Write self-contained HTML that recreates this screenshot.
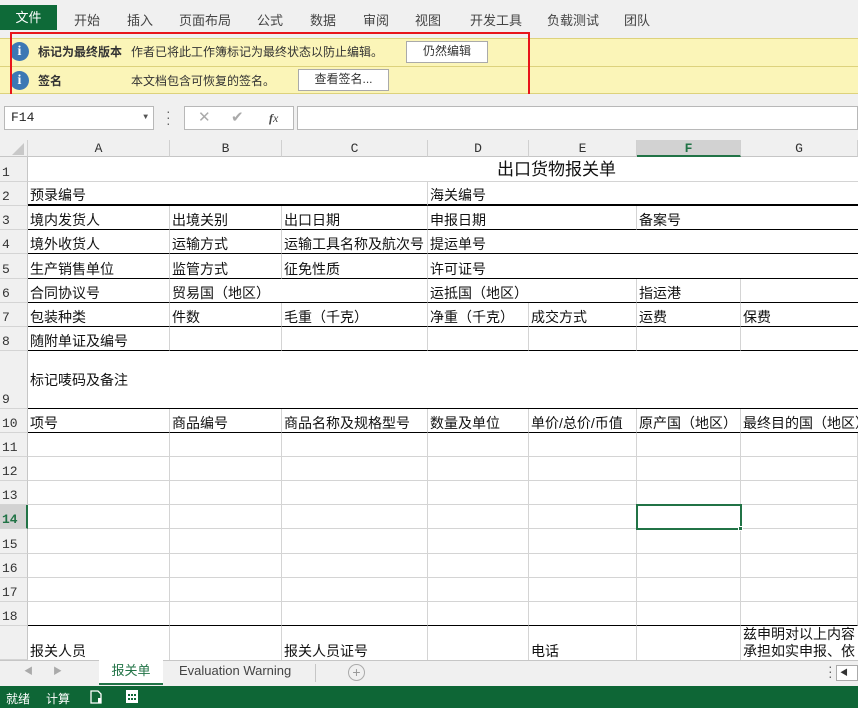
<!DOCTYPE html>
<html><head><meta charset="utf-8"><style>
*{box-sizing:border-box;margin:0;padding:0}
body{width:858px;height:708px;overflow:hidden;position:relative;background:#fff;font-family:"Liberation Sans","Noto Sans CJK SC",sans-serif;color:#222}
.abs{position:absolute}
.menu{left:0;top:0;width:858px;height:38px;background:#f0f0f0}
.file{left:0;top:5px;width:57px;height:25px;background:#0e6a38;color:#fff;font-size:13px;text-align:center;line-height:25px}
.ybar{left:0;top:38px;width:858px;height:56px;background:#fbf5b8;border-top:1px solid #ddd27c;border-bottom:1px solid #ddd27c}
.ydiv{left:0;top:66px;width:858px;height:1px;background:#ddd27c}
.info{width:19px;height:19px;border-radius:50%;background:#3c78b4;color:#fff;font:bold 14px "Liberation Serif",serif;text-align:center;line-height:19px}
.yt{font-size:12px;color:#333}
.btn{background:#fff;border:1px solid #aaa;font-size:12px;text-align:center;line-height:19px;color:#333}
.red{left:10px;top:32px;width:520px;height:64px;border:2px solid #e8141b}
.gray{left:0;top:94px;width:858px;height:46px;background:#f0f0f0}
.box{background:#fff;border:1px solid #b8b8b8}
table{position:absolute;left:28px;top:157px;border-collapse:separate;border-spacing:0;table-layout:fixed;width:830px}
td{border-right:1px solid #d4d4d4;border-bottom:1px solid #d4d4d4;padding:0 2px 0 2px;vertical-align:bottom;white-space:nowrap;overflow:hidden;font-size:14px;line-height:18px;color:#111}
tr.b td{border-bottom:1px solid #000}
tr.bb td{border-bottom:2px solid #000}
tr.last td{vertical-align:top;padding:0}
tr.last td div{height:34px;overflow:hidden;padding:16px 2px 0 2px;white-space:nowrap}
tr.last td div.w{padding-top:0;white-space:normal;word-break:break-all;line-height:17px}
.ch{top:140px;height:17px;background:#f0f0f0;border-right:1px solid #d0d0d0;border-bottom:1px solid #c6c6c6;font:13px "Liberation Mono",monospace;text-align:center;line-height:17px;color:#333}
.rh{left:0;width:28px;background:#f0f0f0;border-right:1px solid #c6c6c6;border-bottom:1px solid #d4d4d4;font:13px "Liberation Mono",monospace;color:#333;text-align:left;padding-left:2px;display:flex;align-items:flex-end;line-height:16px}
.tabs{left:0;top:660px;width:858px;height:26px;background:#f0f0f0;border-top:1px solid #c6c6c6}
.status{left:0;top:686px;width:858px;height:22px;background:#0e6636;color:#fff;font-size:12px}
</style></head><body>
<div class="abs menu"></div>
<div class="abs file">文件</div>
<div class="abs" style="left:0;top:0;width:858px;height:38px">
<span class="abs" style="left:74px;top:10px;font-size:13px;color:#444">开始</span>
<span class="abs" style="left:127px;top:10px;font-size:13px;color:#444">插入</span>
<span class="abs" style="left:179px;top:10px;font-size:13px;color:#444">页面布局</span>
<span class="abs" style="left:257px;top:10px;font-size:13px;color:#444">公式</span>
<span class="abs" style="left:310px;top:10px;font-size:13px;color:#444">数据</span>
<span class="abs" style="left:363px;top:10px;font-size:13px;color:#444">审阅</span>
<span class="abs" style="left:415px;top:10px;font-size:13px;color:#444">视图</span>
<span class="abs" style="left:470px;top:10px;font-size:13px;color:#444">开发工具</span>
<span class="abs" style="left:547px;top:10px;font-size:13px;color:#444">负载测试</span>
<span class="abs" style="left:624px;top:10px;font-size:13px;color:#444">团队</span>
</div>
<div class="abs ybar"></div><div class="abs ydiv"></div>
<div class="abs info" style="left:10px;top:42px">i</div>
<div class="abs info" style="left:10px;top:71px">i</div>
<div class="abs yt" style="left:38px;top:43px;font-weight:bold">标记为最终版本</div>
<div class="abs yt" style="left:131px;top:43px">作者已将此工作簿标记为最终状态以防止编辑。</div>
<div class="abs btn" style="left:406px;top:41px;width:82px;height:22px">仍然编辑</div>
<div class="abs yt" style="left:38px;top:72px;font-weight:bold">签名</div>
<div class="abs yt" style="left:131px;top:72px">本文档包含可恢复的签名。</div>
<div class="abs btn" style="left:298px;top:69px;width:91px;height:22px">查看签名...</div>
<div class="abs red"></div>
<div class="abs gray"></div>
<div class="abs box" style="left:4px;top:106px;width:150px;height:24px;font:13px 'Liberation Mono',monospace;line-height:22px;padding-left:6px">F14<span class="abs" style="right:5px;top:0;font-size:8px;color:#555">▼</span></div>
<div class="abs" style="left:166px;top:108px;font-size:14px;color:#666;line-height:6px">·<br>·<br>·</div>
<div class="abs box" style="left:184px;top:106px;width:110px;height:24px;color:#aaa;font-size:15px;line-height:22px"><span class="abs" style="left:13px">✕</span><span class="abs" style="left:46px">✔</span><span class="abs" style="left:84px;color:#444;font:italic 12px 'Liberation Serif',serif;line-height:22px"><b>f</b>x</span></div>
<div class="abs box" style="left:297px;top:106px;width:561px;height:24px"></div>
<div class="abs ch" style="left:0;width:28px;background:#f0f0f0"><svg width="12" height="12" style="position:absolute;left:12px;top:3px"><path d="M12 0 L12 12 L0 12 Z" fill="#c8c8c8"/></svg></div>
<div class="abs ch" style="left:28px;width:142px">A</div>
<div class="abs ch" style="left:170px;width:112px">B</div>
<div class="abs ch" style="left:282px;width:146px">C</div>
<div class="abs ch" style="left:428px;width:101px">D</div>
<div class="abs ch" style="left:529px;width:108px">E</div>
<div class="abs ch" style="left:637px;width:104px;background:#d2d2d2;color:#217346;font-weight:bold;border-bottom:2px solid #217346">F</div>
<div class="abs ch" style="left:741px;width:117px">G</div>
<div class="abs rh" style="top:157px;height:25px">1</div>
<div class="abs rh" style="top:182px;height:24px">2</div>
<div class="abs rh" style="top:206px;height:24px">3</div>
<div class="abs rh" style="top:230px;height:24px">4</div>
<div class="abs rh" style="top:254px;height:25px">5</div>
<div class="abs rh" style="top:279px;height:24px">6</div>
<div class="abs rh" style="top:303px;height:24px">7</div>
<div class="abs rh" style="top:327px;height:24px">8</div>
<div class="abs rh" style="top:351px;height:58px">9</div>
<div class="abs rh" style="top:409px;height:24px">10</div>
<div class="abs rh" style="top:433px;height:24px">11</div>
<div class="abs rh" style="top:457px;height:24px">12</div>
<div class="abs rh" style="top:481px;height:24px">13</div>
<div class="abs rh" style="top:505px;height:24px;background:#d2d2d2;color:#217346;font-weight:bold;border-right:2px solid #217346">14</div>
<div class="abs rh" style="top:529px;height:25px">15</div>
<div class="abs rh" style="top:554px;height:24px">16</div>
<div class="abs rh" style="top:578px;height:24px">17</div>
<div class="abs rh" style="top:602px;height:24px">18</div>
<div class="abs rh" style="top:626px;height:34px"></div>
<table>
<colgroup><col style="width:142px"><col style="width:112px"><col style="width:146px"><col style="width:101px"><col style="width:108px"><col style="width:104px"><col style="width:117px"></colgroup>
<tr style="height:25px"><td colspan="7" style="padding-left:469px;font-size:17px;line-height:22px;border-right:none">出口货物报关单</td></tr>
<tr class="bb" style="height:24px"><td colspan="3">预录编号</td><td colspan="4" style="border-right:none">海关编号</td></tr>
<tr class="b" style="height:24px"><td>境内发货人</td><td>出境关别</td><td>出口日期</td><td colspan="2">申报日期</td><td colspan="2" style="border-right:none">备案号</td></tr>
<tr class="b" style="height:24px"><td>境外收货人</td><td>运输方式</td><td>运输工具名称及航次号</td><td colspan="4" style="border-right:none">提运单号</td></tr>
<tr class="b" style="height:25px"><td>生产销售单位</td><td>监管方式</td><td>征免性质</td><td colspan="4" style="border-right:none">许可证号</td></tr>
<tr class="b" style="height:24px"><td>合同协议号</td><td colspan="2">贸易国（地区）</td><td colspan="2">运抵国（地区）</td><td>指运港</td><td style="border-right:none"></td></tr>
<tr class="b" style="height:24px"><td>包装种类</td><td>件数</td><td>毛重（千克）</td><td>净重（千克）</td><td>成交方式</td><td>运费</td><td style="border-right:none">保费</td></tr>
<tr class="b" style="height:24px"><td>随附单证及编号</td><td></td><td></td><td></td><td></td><td></td><td style="border-right:none"></td></tr>
<tr class="b" style="height:58px"><td colspan="7" style="vertical-align:middle;border-right:none">标记唛码及备注</td></tr>
<tr class="b" style="height:24px"><td>项号</td><td>商品编号</td><td>商品名称及规格型号</td><td>数量及单位</td><td>单价/总价/币值</td><td>原产国（地区）</td><td style="border-right:none">最终目的国（地区）</td></tr>
<tr style="height:24px"><td></td><td></td><td></td><td></td><td></td><td></td><td></td></tr>
<tr style="height:24px"><td></td><td></td><td></td><td></td><td></td><td></td><td></td></tr>
<tr style="height:24px"><td></td><td></td><td></td><td></td><td></td><td></td><td></td></tr>
<tr style="height:24px"><td></td><td></td><td></td><td></td><td></td><td></td><td></td></tr>
<tr style="height:25px"><td></td><td></td><td></td><td></td><td></td><td></td><td></td></tr>
<tr style="height:24px"><td></td><td></td><td></td><td></td><td></td><td></td><td></td></tr>
<tr style="height:24px"><td></td><td></td><td></td><td></td><td></td><td></td><td></td></tr>
<tr class="b" style="height:24px"><td></td><td></td><td></td><td></td><td></td><td></td><td></td></tr>
<tr class="last" style="height:34px"><td><div>报关人员</div></td><td><div></div></td><td><div>报关人员证号</div></td><td><div></div></td><td><div>电话</div></td><td><div></div></td><td style="border-right:none"><div class="w">兹申明对以上内容承担如实申报、依法纳税之法律责任</div></td></tr>
</table>
<div class="abs" style="left:636px;top:504px;width:106px;height:26px;border:2px solid #217346"></div>
<div class="abs" style="left:738px;top:526px;width:5px;height:5px;background:#217346;border:1px solid #fff"></div>
<div class="abs tabs"></div>
<div class="abs" style="left:24px;top:664px;font-size:9px;color:#aaa">◀</div>
<div class="abs" style="left:53px;top:664px;font-size:9px;color:#aaa">▶</div>
<div class="abs" style="left:99px;top:659px;width:64px;height:26px;background:#fff;border-bottom:2px solid #217346;color:#217346;font-size:13px;text-align:center;line-height:23px">报关单</div>
<div class="abs" style="left:179px;top:663px;font-size:13px;color:#444">Evaluation Warning</div>
<div class="abs" style="left:315px;top:664px;width:1px;height:18px;background:#c6c6c6"></div>
<div class="abs" style="left:348px;top:664px;width:17px;height:17px;border:1px solid #aaa;border-radius:50%;color:#999;font-size:14px;text-align:center;line-height:14px">+</div>
<div class="abs" style="left:828px;top:664px;font-size:14px;color:#666;line-height:5px">·<br>·<br>·</div>
<div class="abs" style="left:836px;top:665px;width:22px;height:16px;background:#fff;border:1px solid #aaa;font-size:8px;line-height:14px;padding-left:3px;color:#333">◀</div>
<div class="abs status"></div>
<div class="abs" style="left:6px;top:690px;color:#fff;font-size:12px">就绪</div>
<div class="abs" style="left:46px;top:690px;color:#fff;font-size:12px">计算</div>
<svg class="abs" style="left:90px;top:690px" width="13" height="14"><path d="M1 1H8L11 4V13H1Z" fill="none" stroke="#fff" stroke-width="1.3"/><rect x="8" y="8" width="3" height="5" fill="#fff"/></svg>
<svg class="abs" style="left:125px;top:689px" width="14" height="15"><rect x="1" y="1" width="12" height="13" fill="#fff"/><g fill="#0e6636"><rect x="3" y="5" width="2" height="2"/><rect x="6" y="5" width="2" height="2"/><rect x="9" y="5" width="2" height="2"/><rect x="3" y="9" width="2" height="2"/><rect x="6" y="9" width="2" height="2"/><rect x="9" y="9" width="2" height="2"/></g></svg>
</body></html>
